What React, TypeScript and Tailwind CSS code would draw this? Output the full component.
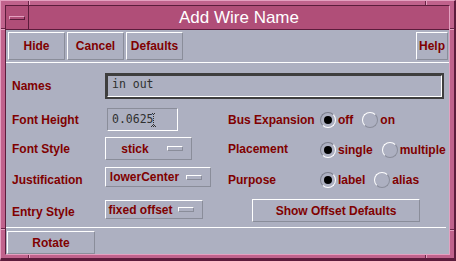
import React from "react"

const label = "font-['Liberation_Sans',Arial,sans-serif] text-[12px] font-bold text-[#800000] leading-none whitespace-nowrap"
const raised = "border-t border-l border-t-white border-l-white border-b border-r border-b-[#8a8d9a] border-r-[#8a8d9a]"

function PushButton({ text, className = "" }: { text: string; className?: string }) {
  return (
    <div className={`flex shrink-0 items-center justify-center ${raised} ${label} ${className}`}>
      {text}
    </div>
  )
}

function OptionMenu({ value, className = "" }: { value: string; className?: string }) {
  return (
    <div className={`flex shrink-0 items-center ${raised} ${className}`}>
      <span className={`flex-1 text-center ${label}`}>{value}</span>
      <span className="ml-[3px] mr-[8px] h-[5px] w-[16px] shrink-0 border-t border-l border-t-white border-l-white border-b border-r border-b-[#8a8d9a] border-r-[#8a8d9a]" />
    </div>
  )
}

function Radio({ text, on }: { text: string; on?: boolean }) {
  return (
    <div className="mr-[9px] flex shrink-0 items-center">
      <div
        className={`flex h-[16px] w-[16px] items-center justify-center rounded-full border ${
          on
            ? "border-t-[#7c7f8c] border-l-[#7c7f8c] border-b-white border-r-white"
            : "border-t-white border-l-white border-b-[#8a8d9a] border-r-[#8a8d9a]"
        }`}
      >
        {on && <div className="h-[8px] w-[8px] rounded-full bg-black" />}
      </div>
      <span className={`ml-[2px] ${label}`}>{text}</span>
    </div>
  )
}

function Cursor() {
  const dots: [number, number][] = [
    [1, 0], [3, 0], [2, 1], [2, 3], [2, 5], [2, 7], [2, 9], [2, 11], [1, 12], [3, 12], [2, 13], [0, 13], [4, 13],
  ]
  return (
    <svg width="5" height="14" className="-ml-[3px] mt-[1px] shrink-0" viewBox="0 0 5 14">
      {dots.map(([x, y], i) => (
        <rect key={i} x={x} y={y} width="1" height="1" fill="#303030" />
      ))}
    </svg>
  )
}

export default function App() {
  return (
    <div className="relative h-[261px] w-[456px] overflow-hidden border-t border-l border-[#e4a0c0] border-b-[3px] border-r-2 border-b-[#5c1c3c] border-r-[#5c1c3c] bg-[#c0628c] pt-[4px] pl-[4px] pr-[4px] pb-[3px]">
      {/* resize notches */}
      <div className="absolute left-[27px] top-0 h-[4px] w-[1px] bg-[#6a2446]" />
      <div className="absolute left-[28px] top-0 h-[4px] w-[1px] bg-[#e4a0c0]" />
      <div className="absolute left-[424px] top-0 h-[4px] w-[1px] bg-[#6a2446]" />
      <div className="absolute left-[425px] top-0 h-[4px] w-[1px] bg-[#e4a0c0]" />
      <div className="absolute left-0 top-[27px] h-[1px] w-[4px] bg-[#6a2446]" />
      <div className="absolute left-0 top-[28px] h-[1px] w-[4px] bg-[#e4a0c0]" />
      <div className="absolute right-0 top-[27px] h-[1px] w-[4px] bg-[#6a2446]" />
      <div className="absolute right-0 top-[28px] h-[1px] w-[4px] bg-[#e4a0c0]" />
      <div className="absolute left-0 top-[227px] h-[1px] w-[4px] bg-[#6a2446]" />
      <div className="absolute left-0 top-[228px] h-[1px] w-[4px] bg-[#e4a0c0]" />
      <div className="absolute right-0 top-[228px] h-[1px] w-[4px] bg-[#6a2446]" />
      <div className="absolute right-0 top-[229px] h-[1px] w-[4px] bg-[#e4a0c0]" />
      <div className="absolute bottom-0 left-[27px] h-[3px] w-[1px] bg-[#6a2446]" />
      <div className="absolute bottom-0 left-[28px] h-[3px] w-[1px] bg-[#e4a0c0]" />
      <div className="absolute bottom-0 left-[424px] h-[3px] w-[1px] bg-[#6a2446]" />
      <div className="absolute bottom-0 left-[425px] h-[3px] w-[1px] bg-[#e4a0c0]" />

      <div className="flex h-full flex-col border-t border-l border-[#5c1c3c] border-b border-r border-b-[#e4a0c0] border-r-[#e4a0c0]">
        {/* title bar */}
        <div className="flex h-[24px] shrink-0 border-b border-[#5c1c3c] bg-[#b04e78]">
          <div className="flex w-[23px] items-center justify-center border-r border-[#5c1c3c]">
            <div className="h-[4px] w-[16px] border-t border-l border-[#e4a0c0] border-b border-r border-b-[#5c1c3c] border-r-[#5c1c3c] bg-[#b04e78]" />
          </div>
          <div className="flex flex-1 items-center justify-center font-['Liberation_Sans',Arial,sans-serif] text-[17px] leading-none text-white">
            Add Wire Name
          </div>
        </div>

        {/* body */}
        <div className="flex flex-1 flex-col bg-[#adb0c1] pt-[2px]">
          <div className="flex h-[28px] pl-[2px] pr-[1px]">
            <PushButton text="Hide" className="w-[57px]" />
            <PushButton text="Cancel" className="ml-[2px] w-[57px]" />
            <PushButton text="Defaults" className="ml-[2px] w-[57px]" />
            <PushButton text="Help" className="ml-auto w-[32px]" />
          </div>
          <div className="mt-[2px] h-[1px] bg-white" />

          {/* Names */}
          <div className="mt-[10px] flex h-[26px] items-center pl-[6px]">
            <span className={`w-[93px] shrink-0 ${label}`}>Names</span>
            <div className="h-[26px] w-[339px] shrink-0 border-2 border-[#3e3e3e]">
              <div className="flex h-full items-center border-t border-l border-[#3e3e3e] border-b border-r border-b-white border-r-white pl-[4px] font-['DejaVu_Sans_Mono',monospace] text-[11.5px] text-[#303030]">
                <span className="-mt-[3px]">in out</span>
              </div>
            </div>
          </div>

          {/* Font Height / Bus Expansion */}
          <div className="mt-[9px] flex h-[23px] items-center pl-[6px]">
            <div className="flex w-[216px] shrink-0 items-center">
              <span className={`w-[93px] shrink-0 ${label}`}>Font Height</span>
              <div className="ml-[2px] flex h-[23px] w-[71px] shrink-0 items-center border-t border-l border-[#8a8d9a] border-b border-r border-b-white border-r-white pl-[4px] font-['DejaVu_Sans_Mono',monospace] text-[11.5px] text-[#303030]">
                <span>0.0625</span>
                <Cursor />
              </div>
            </div>
            <span className={`w-[92px] shrink-0 ${label}`}>Bus Expansion</span>
            <Radio text="off" on />
            <Radio text="on" />
          </div>

          {/* Font Style / Placement */}
          <div className="mt-[6px] flex h-[23px] items-center pl-[6px]">
            <div className="flex w-[216px] shrink-0 items-center">
              <span className={`w-[93px] shrink-0 ${label}`}>Font Style</span>
              <OptionMenu value="stick" className="h-[23px] w-[87px]" />
            </div>
            <span className={`w-[92px] shrink-0 ${label}`}>Placement</span>
            <div className="mt-[3px] flex items-center">
              <Radio text="single" on />
              <Radio text="multiple" />
            </div>
          </div>

          {/* Justification / Purpose */}
          <div className="mt-[8px] flex h-[23px] items-center pl-[6px]">
            <div className="flex w-[216px] shrink-0 items-center">
              <span className={`w-[93px] shrink-0 ${label}`}>Justification</span>
              <OptionMenu value="lowerCenter" className="mb-[5px] h-[20px] w-[106px]" />
            </div>
            <span className={`w-[92px] shrink-0 ${label}`}>Purpose</span>
            <Radio text="label" on />
            <Radio text="alias" />
          </div>

          {/* Entry Style / Show Offset Defaults */}
          <div className="mt-[8px] flex h-[23px] items-center pl-[6px]">
            <div className="flex w-[216px] shrink-0 items-center">
              <span className={`mt-[3px] w-[93px] shrink-0 ${label}`}>Entry Style</span>
              <OptionMenu value="fixed offset" className="mb-[2px] h-[19px] w-[98px]" />
            </div>
            <PushButton text="Show Offset Defaults" className="ml-[24px] h-[23px] w-[168px]" />
          </div>

          <div className="mt-[5px] mr-[3px] h-[1px] bg-white" />
          <div className="mt-[3px] flex pl-[1px]">
            <PushButton text="Rotate" className="h-[23px] w-[88px]" />
          </div>
        </div>
      </div>
    </div>
  )
}
